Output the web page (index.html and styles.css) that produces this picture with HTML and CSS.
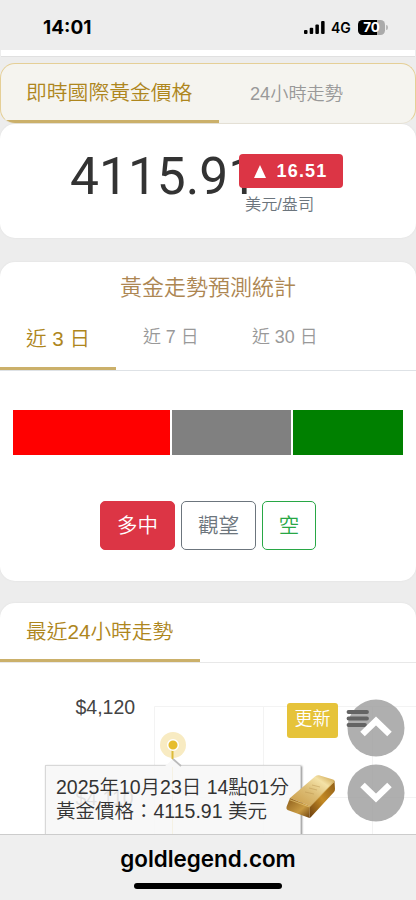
FILE: index.html
```html
<!DOCTYPE html>
<html lang="zh-Hant">
<head>
<meta charset="utf-8">
<meta name="viewport" content="width=device-width, initial-scale=1">
<title>goldlegend.com</title>
<link rel="stylesheet" href="styles.css">
</head>
<body>
<div class="screen">
  <header class="status">
    <span class="clock">14:01</span>
    <div class="indicators">
      <svg class="signal" width="21" height="13" viewBox="0 0 21 13"><rect x="0" y="9" width="3.5" height="4" rx="1"/><rect x="5.7" y="6.7" width="3.5" height="6.3" rx="1"/><rect x="11.4" y="3.5" width="3.5" height="9.5" rx="1"/><rect x="17.1" y="0" width="3.5" height="13" rx="1"/></svg>
      <span class="network">4G</span>
      <span class="battery">70</span>
      <i class="battery-tip"></i>
    </div>
  </header>

  <main class="page">
    <div class="strip"></div>
    <nav class="tabs price-tabs">
      <span class="tab active">即時國際黃金價格</span>
      <span class="tab">24小時走勢</span>
    </nav>
    <section class="card price-card">
      <span class="price">4115.91</span>
      <div class="change">
        <span class="badge"><i class="triangle"></i>16.51</span>
        <span class="unit">美元/盎司</span>
      </div>
    </section>

    <section class="card forecast">
      <h2>黃金走勢預測統計</h2>
      <nav class="tabs day-tabs">
        <span class="tab active">近 3 日</span>
        <span class="tab">近 7 日</span>
        <span class="tab">近 30 日</span>
      </nav>
      <div class="ratio"><i class="bull"></i><i class="hold"></i><i class="bear"></i></div>
      <div class="votes">
        <span class="btn red">多中</span>
        <span class="btn gray">觀望</span>
        <span class="btn green">空</span>
      </div>
    </section>

    <section class="card trend">
      <nav class="tabs trend-tabs"><span class="tab active">最近24小時走勢</span></nav>
      <div class="chart">
        <svg class="plot" width="416" height="171" viewBox="0 0 416 171">
          <path d="M154.5 171V43.500H416M263.500 43V171M372.500 43V171M154 134.500H416" fill="none" stroke="#f3f3f3"/>
          <path d="M172.500 82V171" stroke="#e2c55f"/>
          <text x="75.500" y="51" class="axis">$4,120</text>
          <text x="75.500" y="142" class="axis">$4,110</text>
          <circle cx="173" cy="82" r="13" fill="#f8ebc2"/>
          <path d="M172.500 87V96" stroke="#dcbb39" stroke-width="2"/>
          <circle cx="173" cy="82" r="5.300" fill="#e6bd2d" stroke="#fff" stroke-width="1.500"/>
        </svg>
        <div class="tooltip">
          <svg class="pointer" width="20" height="11" viewBox="0 0 20 11"><path d="M1 11L10 3L19 11" fill="#f8f8f8"/><path d="M10 3L18 10" fill="none" stroke="#bbb" stroke-width="1.800"/></svg>
          <div class="tip-date">2025年10月23日 14點01分</div>
          <div>黃金價格：4115.91 美元</div>
        </div>
        <span class="refresh">更新</span>
        <svg class="gold" width="50" height="46" viewBox="0 0 50 46">
          <defs>
            <linearGradient id="gold-top" x1="0" y1="1" x2="1" y2="0"><stop stop-color="#c99a45"/><stop offset=".45" stop-color="#dcbc74"/><stop offset=".75" stop-color="#f4e2a7"/><stop offset="1" stop-color="#c5963a"/></linearGradient>
            <linearGradient id="gold-front" x1="0" y1="0" x2="1" y2="1"><stop stop-color="#8b5c1a"/><stop offset=".6" stop-color="#c89a42"/><stop offset="1" stop-color="#704411"/></linearGradient>
            <linearGradient id="gold-side" x1="0" y1="1" x2="1" y2="0"><stop stop-color="#6b3e0e"/><stop offset=".5" stop-color="#c48a24"/><stop offset="1" stop-color="#8f5d17"/></linearGradient>
          </defs>
          <path d="M4 25L29 3.500Q31 2 33 2.300L47 6.500Q49 7 48.500 8.500L24 33Z" fill="url(#gold-top)"/>
          <path d="M4 25L24 33L23.500 45L1.500 37Q0 36 .5 34Z" fill="url(#gold-front)"/>
          <path d="M24 33L48.500 8L49 16Q49 18 48 19L25 44Q24 45 23.500 45Z" fill="url(#gold-side)"/>
          <path d="M3 26.500L23.500 34L48 9" fill="none" stroke="#e8c876" stroke-width=".7"/>
          <path d="M26 12l8 2M23 15l8 2M19 19l9 2" stroke="#b8924c" stroke-width=".8" opacity=".55"/>
        </svg>
        <svg class="scroll" width="62" height="123" viewBox="0 0 62 123">
          <g fill="#9b9b9b" fill-opacity=".8"><circle cx="31" cy="29" r="28.500"/><circle cx="31" cy="94" r="28.500"/></g>
          <path d="M3.500 13H22M3.500 19.500H22M3.500 26H20" stroke="#646464" stroke-width="3.800" stroke-linecap="round"/>
          <path d="M17.500 35L31 22L44.500 35M17.500 86L31 99L44.500 86" fill="none" stroke="#fff" stroke-width="6.500"/>
        </svg>
      </div>
    </section>
  </main>

  <footer class="address">
    <span>goldlegend.com</span>
    <i class="home"></i>
  </footer>
</div>
</body>
</html>
```
FILE: styles.css
```css
* { box-sizing: border-box; }
body { margin: 0; background: #ededed; font-family: "Liberation Sans", "Noto Sans CJK TC", sans-serif; font-weight: 350; }
.screen { width: 416px; height: 900px; overflow: hidden; display: flex; flex-direction: column; }
i { display: block; font-style: normal; }
svg { display: block; }

.status { height: 50px; flex: none; display: flex; justify-content: space-between; padding: 5px 28px 0 43px; font-family: Inter, sans-serif; align-items: center; color: #000; }
.clock { font-size: 19px; font-weight: 700; letter-spacing: 0; }
.indicators { display: flex; align-items: center; }
.network { font-size: 14px; font-weight: 600; margin-left: 6px; width: 21px; }
.battery { width: 27px; height: 15px; margin-left: 6px; border-radius: 4.5px; background: linear-gradient(90deg, #000 70%, #aaa 70%); color: #fff; font-size: 13.5px; font-weight: 700; line-height: 15px; text-align: center; }
.battery-tip { width: 2px; height: 5px; margin-left: 1px; border-radius: 0 2px 2px 0; background: #b8b8b8; }

.page { height: 784px; flex: none; overflow: hidden; }
.strip { height: 7px; margin: 0 1px 6px; background: #fff; border-bottom: 1px solid #e0e0e0; }
.tabs { display: flex; }
.tab { display: flex; align-items: center; white-space: nowrap; color: #999; }
.active { color: #ae861d; border-bottom: 3px solid #cbb06a; }
.price-tabs { height: 61px; background: #f5f4ef; border: 1px solid #e5cf96; border-bottom-color: #e7e2d3; border-radius: 15px; overflow: hidden; }
.price-tabs .tab { font-size: 18.2px; padding: 0 0 3px 31px; }
.price-tabs .active { width: 218px; padding: 0 0 2px 25px; font-size: 20.8px; }

.card { background: #fff; border-radius: 15px; box-shadow: 0 0 2px #dedede; }
.price-card { height: 114px; display: flex; padding-left: 70px; margin-bottom: 24px; }
.price { width: 169px; padding-top: 25px; font-family: Roboto, sans-serif; font-size: 51.5px; font-weight: 400; line-height: 56px; color: #333; white-space: nowrap; }
.change { position: relative; padding-top: 30px; }
.badge { display: flex; align-items: center; justify-content: center; gap: 10px; width: 104px; height: 34px; border-radius: 4px; background: #dc3545; color: #fff; font-weight: 700; font-size: 18px; letter-spacing: 1.2px; }
.triangle { flex: none; border: 6.5px solid transparent; border-top: 0; border-bottom: 13px solid #fff; }
.unit { display: block; padding-left: 6px; font-size: 16.2px; line-height: 32px; color: #6c757d; }

.forecast { height: 319px; margin-bottom: 22px; }
h2 { margin: 0; height: 52px; font-size: 22px; font-weight: 350; line-height: 52px; text-align: center; color: #ad8652; }
.day-tabs { height: 57px; border-bottom: 1px solid #dee2e6; }
.day-tabs .tab { width: 109px; padding: 0 0 14px 27px; font-size: 17.9px; }
.day-tabs .active { width: 116px; padding: 0 0 8px 26px; font-size: 20.6px; }
.ratio { display: grid; grid-template-columns: 157px 119px 110px; gap: 2px; height: 45px; margin: 39px 13px 46px; }
.bull { background: #f00; }
.hold { background: #808080; }
.bear { background: #008000; }
.votes { display: flex; justify-content: center; gap: 6px; }
.btn { display: flex; align-items: center; justify-content: center; width: 75px; height: 49px; padding-bottom: 3px; border: 1px solid; border-radius: 5px; font-size: 20.5px; }
.red { background: #dc3545; border-color: #dc3545; color: #fff; }
.gray { color: #6c757d; }
.green { width: 54px; color: #28a745; }

.trend { height: 300px; }
.trend-tabs { height: 60px; border-bottom: 1px solid #e8e8e8; }
.trend-tabs .tab { width: 200px; padding: 0 0 2px 26px; font-size: 20.7px; }
.chart { position: relative; }
.axis { font-family: "Liberation Sans", sans-serif; font-size: 19.5px; fill: #444; }
.tooltip { position: absolute; left: 45px; top: 102px; width: 256px; height: 90px; padding: 9px 10px; background: rgba(247,247,247,.88); border: 1px solid #d8d8d8; box-shadow: 1px 1px 2px #888; color: #333; font-size: 19.5px; line-height: 24px; white-space: nowrap; }
.pointer { position: absolute; left: 117px; top: -10px; }
.refresh { position: absolute; left: 287px; top: 40px; width: 51px; height: 35px; border-radius: 3px; background: #e6c33a; color: #fff; text-align: center; font-size: 18px; line-height: 32px; }
.gold { position: absolute; left: 286px; top: 110px; }
.scroll { position: absolute; left: 345px; top: 36px; }

.address { height: 66px; flex: none; border-top: 1px solid #ccc; background: #efefef; display: flex; flex-direction: column; align-items: center; color: #000; font-size: 22.4px; font-weight: 600; line-height: 26px; padding-top: 11px; font-family: Inter, sans-serif; }
.home { width: 148px; height: 6px; border-radius: 3px; background: #000; margin-top: 11px; }
```
